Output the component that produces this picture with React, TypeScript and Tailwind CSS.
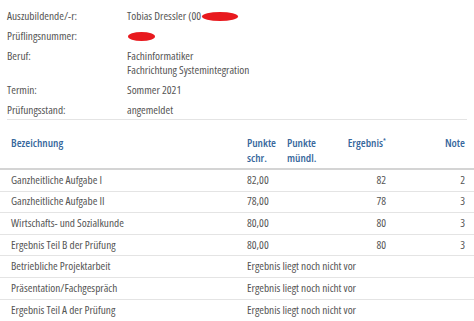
import React from 'react';

const info = [
  { label: 'Auszubildende/-r:', value: ['Tobias Dressler (00'], red: 'name' },
  { label: 'Prüflingsnummer:', value: [''], red: 'nr' },
  { label: 'Beruf:', value: ['Fachinformatiker', 'Fachrichtung Systemintegration'] },
  { label: 'Termin:', value: ['Sommer 2021'] },
  { label: 'Prüfungsstand:', value: ['angemeldet'] },
];

const rows = [
  { name: 'Ganzheitliche Aufgabe I', schr: '82,00', erg: '82', note: '2' },
  { name: 'Ganzheitliche Aufgabe II', schr: '78,00', erg: '78', note: '3' },
  { name: 'Wirtschafts- und Sozialkunde', schr: '80,00', erg: '80', note: '3' },
  { name: 'Ergebnis Teil B der Prüfung', schr: '80,00', erg: '80', note: '3' },
  { name: 'Betriebliche Projektarbeit' },
  { name: 'Präsentation/Fachgespräch' },
  { name: 'Ergebnis Teil A der Prüfung' },
];

const Scribble = ({ w }: { w: number }) => (
  <svg width={w} height="11" viewBox={`0 0 ${w} 11`} className="inline-block align-middle">
    <ellipse cx={w / 2} cy="5.5" rx={w / 2 - 1} ry="4.5" fill="#e8191e" />
  </svg>
);

export default function App() {
  return (
    <div className="w-[474px] h-[321px] bg-white overflow-hidden text-[11.3px] font-stretch-[75%] text-[#555555] font-['Open_Sans',sans-serif]">
      <div className="mx-[7px] pt-[9px] pb-[2px] flex flex-col gap-[6px] border-b border-[#e4e4e4]">
        {info.map((r) => (
          <div key={r.label} className="flex leading-[14px]">
            <div className="w-[120px]">{r.label}</div>
            <div>
              {r.value.map((v, i) => (
                <div key={i} className="flex items-center h-[14px]">
                  {v}
                  {r.red === 'name' && <Scribble w={38} />}
                  {r.red === 'nr' && <Scribble w={29} />}
                </div>
              ))}
            </div>
          </div>
        ))}
      </div>
      <div className="mt-[15px] grid grid-cols-[247px_40px_52px_47px_88px] text-[#36679c] font-semibold leading-[15px] pb-[3px] border-b-2 border-[#d4d4d4]">
        <div className="pl-[11px]">Bezeichnung</div>
        <div>Punkte<br />schr.</div>
        <div>Punkte<br />mündl.</div>
        <div className="text-right">Ergebnis<span className="relative -top-[4px] text-[7px]">*</span></div>
        <div className="text-right pr-[9px]">Note</div>
      </div>
      {rows.map((r) => (
        <div
          key={r.name}
          className="grid grid-cols-[247px_40px_52px_47px_88px] h-[21.6px] items-center border-b border-[#e4e4e4] last:border-b-0"
        >
          <div className="pl-[11px]">{r.name}</div>
          {r.schr ? (
            <>
              <div>{r.schr}</div>
              <div />
              <div className="text-right">{r.erg}</div>
              <div className="text-right pr-[9px]">{r.note}</div>
            </>
          ) : (
            <div className="col-span-4">Ergebnis liegt noch nicht vor</div>
          )}
        </div>
      ))}
    </div>
  );
}
